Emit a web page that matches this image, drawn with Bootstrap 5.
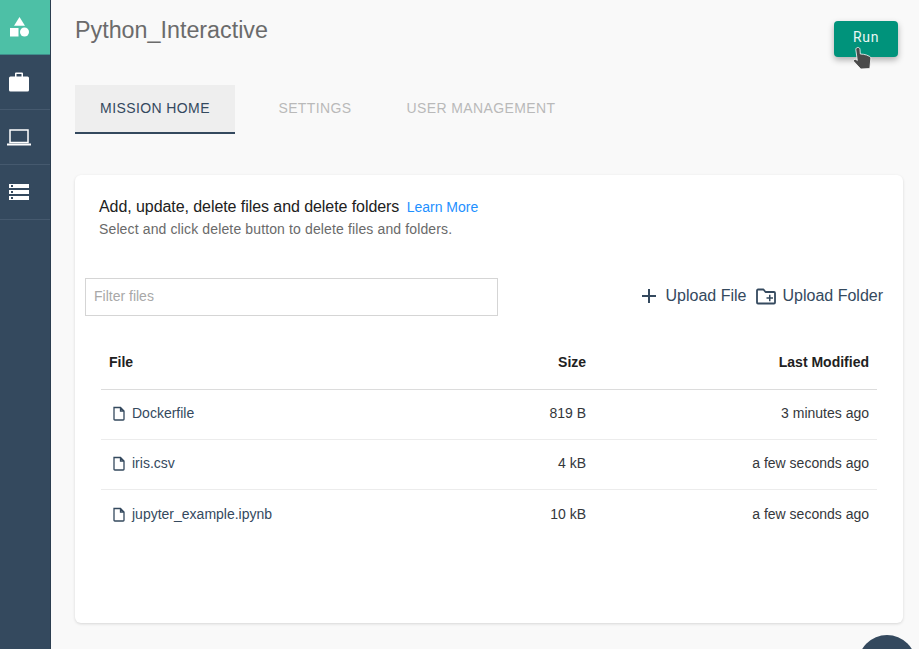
<!DOCTYPE html>
<html lang="en">

<head>
    <meta charset="UTF-8" />
    <title>Python_Interactive</title>
    <link href="https://cdn.jsdelivr.net/npm/bootstrap@5.3.3/dist/css/bootstrap.min.css" rel="stylesheet" />
    <style>
        html, body {
            height: 649px;
            overflow: hidden;
        }

        body {
            background: #f9f9f9;
            font-family: "Liberation Sans", Arial, sans-serif;
            font-size: 14px;
            color: #212529;
        }

        .page-wrap {
            height: 649px;
            overflow: hidden;
        }

        .side-bar {
            width: 51px;
            flex: 0 0 51px;
            height: 649px;
            background: #34495e;
            border-right: 1px solid #2c3e50;
        }

        .side-item {
            height: 55px;
            padding-left: 9px;
            border-bottom: 1px solid #45596e;
        }

        .side-item.side-top {
            background: #4dc0a6;
            border-bottom-color: #3f8f8c;
        }

        .side-item.side-wide {
            padding-left: 7px;
        }

        .main-area {
            flex: 1 1 auto;
            min-width: 0;
            padding: 0 16px 0 24px;
        }

        .page-title {
            font-size: 23.3px;
            font-weight: 400;
            line-height: 26px;
            color: #6b6b6b;
            margin: 17px 0 0;
        }

        .run-btn {
            width: 64px;
            height: 36px;
            margin: 21px 5px 0 0;
            padding: 0 0 4px;
            background: #00937b;
            color: #e9f7f4;
            font-family: Roboto, sans-serif;
            font-size: 14px;
            letter-spacing: 0.7px;
            border: 0;
            border-radius: 4px;
            box-shadow: 0 3px 6px rgba(0, 0, 0, 0.3);
        }

        .hand-cursor {
            position: absolute;
            left: 18px;
            top: 46px;
        }

        .tab-row {
            margin-top: 28px;
        }

        .tab-link {
            display: block;
            width: 160px;
            height: 49px;
            line-height: 47px;
            text-align: center;
            font-size: 14px;
            letter-spacing: 0.4px;
            color: #b9b9b9;
            text-decoration: none;
            border-bottom: 2px solid transparent;
        }

        .tab-link.tab-on {
            background: #eeeeee;
            color: #34495e;
            border-bottom-color: #34495e;
        }

        .tab-link.tab-wide {
            width: 172px;
        }

        .panel-box {
            margin-top: 41px;
            height: 448px;
            background: #fff;
            border-radius: 6px;
            box-shadow: 0 1px 3px rgba(0, 0, 0, 0.14);
            padding: 22px 10px 0;
        }

        .panel-head {
            padding-left: 14px;
            font-size: 16px;
            letter-spacing: -0.07px;
            line-height: 20px;
            color: #212121;
        }

        .learn-link {
            font-size: 14px;
            letter-spacing: 0;
            color: #1e90ff;
            text-decoration: none;
            margin-left: 3px;
        }

        .panel-sub {
            padding-left: 14px;
            font-size: 14px;
            letter-spacing: 0.13px;
            line-height: 20px;
            color: #6a6a6a;
            margin-top: 2px;
        }

        .filter-input {
            width: 413px;
            height: 38px;
            border: 1px solid #d5d5d5;
            padding: 0 8px 2px;
            font-size: 14px;
            outline: 0;
        }

        .filter-input::placeholder {
            color: #a8a8a8;
        }

        .upload-row {
            margin-top: 39px;
            padding-right: 10px;
        }

        .upload-list {
            gap: 9px;
            padding-bottom: 2px;
        }

        .upload-act {
            gap: 8px;
            font-size: 16px;
            color: #34495e;
            background: none;
            border: 0;
            padding: 0;
        }

        .upload-act.upload-folder {
            gap: 7px;
        }

        .file-table {
            margin: 26px 0 0 16px;
            width: 776px;
            font-size: 14px;
        }

        .file-table th {
            height: 47px;
            font-weight: 700;
            color: #212121;
            padding: 0 8px 5px;
            border-bottom: 1px solid #dcdcdc;
        }

        .file-table td {
            height: 50px;
            padding: 0 8px 2px;
            color: #34373b;
            border-bottom: 1px solid #ececec;
        }

        .file-table th:nth-child(2),
        .file-table td:nth-child(2) {
            padding-right: 9px;
        }

        .file-table tr:last-child td {
            padding-bottom: 0;
            border-bottom: 0;
        }

        .file-table td.file-name {
            color: #34495e;
        }

        .file-line {
            gap: 6px;
            padding-left: 3px;
        }

        .chat-bubble {
            position: absolute;
            left: 858px;
            top: 635px;
            width: 58px;
            height: 58px;
            border-radius: 50%;
            background: #34495e;
        }
    </style>
</head>

<body>
    <div class="page-wrap d-flex position-relative">
        <div class="side-bar">
            <div class="side-item side-top d-flex align-items-center">
                <svg width="20" height="20" viewBox="0 0 20 20" fill="#fff">
                    <path d="M10.500 0l5.500 8.800H5z" />
                    <rect x="1" y="11" width="8.500" height="8.500" />
                    <circle cx="15.500" cy="15" r="4.500" />
                </svg>
            </div>
            <div class="side-item d-flex align-items-center">
                <svg width="20" height="20" viewBox="0 0 20 20" fill="#fff">
                    <path fill-rule="evenodd" d="M7 0.500h6a1 1 0 0 1 1 1V4.500h4.500a1.500 1.500 0 0 1 1.500 1.500v12a1.500 1.500 0 0 1-1.500 1.500H1.500A1.500 1.500 0 0 1 0 18V6a1.500 1.500 0 0 1 1.500-1.500H6V1.500a1 1 0 0 1 1-1zM7.500 2v2.500h5V2z" />
                </svg>
            </div>
            <div class="side-item side-wide d-flex align-items-center">
                <svg width="24" height="17" viewBox="0 0 24 17" fill="none" stroke="#fff">
                    <rect x="3" y="1" width="18" height="12.500" stroke-width="1.500" />
                    <path d="M0 15.500h24" stroke-width="2" />
                </svg>
            </div>
            <div class="side-item d-flex align-items-center">
                <svg width="20" height="16" viewBox="0 0 20 16" fill="#fff">
                    <path fill-rule="evenodd" d="M0 0h20v4H0zM2 1v2h2V1zM0 6h20v4H0zM2 7v2h2V7zM0 12h20v4H0zM2 13v2h2v-2z" />
                </svg>
            </div>
        </div>

        <div class="main-area">
            <div class="d-flex justify-content-between align-items-start">
                <h1 class="page-title">Python_Interactive</h1>
                <div class="position-relative">
                    <button class="run-btn">Run</button>
                    <svg class="hand-cursor" width="20" height="25" viewBox="0 0 20 25">
                        <path d="M3.800 3.500C3.800.8 8 .8 8 3.500L8.300 8 11.500 8.300 14.500 9l3.300 1.500c1 .5 1 1.500 1 2.500l-1 9.500-9 .5-7-7.500c-1-1.500 1-3 2.300-2l1.200 1z" fill="#4a4a4a" stroke="#fff" stroke-width="0.800" />
                    </svg>
                </div>
            </div>

            <div class="d-flex tab-row">
                <a class="tab-link tab-on" href="#">MISSION HOME</a>
                <a class="tab-link" href="#">SETTINGS</a>
                <a class="tab-link tab-wide" href="#">USER MANAGEMENT</a>
            </div>

            <div class="panel-box">
                <div class="panel-head">Add, update, delete files and delete folders <a class="learn-link" href="#">Learn More</a></div>
                <div class="panel-sub">Select and click delete button to delete files and folders.</div>

                <div class="d-flex justify-content-between align-items-center upload-row">
                    <input class="filter-input" type="text" placeholder="Filter files" />
                    <div class="d-flex align-items-center upload-list">
                        <button class="upload-act d-flex align-items-center">
                            <svg width="18" height="18" viewBox="0 0 18 18" stroke="#34495e" stroke-width="2" fill="none">
                                <path d="M9 2v14M2 9h14" />
                            </svg>
                            Upload File
                        </button>
                        <button class="upload-act upload-folder d-flex align-items-center">
                            <svg width="20" height="17" viewBox="0 0 20 17" stroke="#34495e" stroke-width="1.800" fill="none">
                                <path d="M1 2.500a1 1 0 0 1 1-1h5.500l2 2.500H18a1 1 0 0 1 1 1v9.500a1 1 0 0 1-1 1H2a1 1 0 0 1-1-1z" stroke-linejoin="round" />
                                <path d="M10.500 10h6.500M13.750 6.800v6.400" stroke-width="1.500" />
                            </svg>
                            Upload Folder
                        </button>
                    </div>
                </div>

                <table class="file-table">
                    <thead>
                        <tr>
                            <th>File</th>
                            <th class="text-end">Size</th>
                            <th class="text-end">Last Modified</th>
                        </tr>
                    </thead>
                    <tbody>
                        <tr>
                            <td class="file-name"><span class="file-line d-flex align-items-center"><svg width="14" height="15" viewBox="0 0 14 15" fill="none" stroke="#34495e" stroke-width="1.300"><path d="M2 1.500h6.500L12 5v8.200a.8.8 0 0 1-.8.8H2.800a.8.8 0 0 1-.8-.8zM8.500 1.500V5H12" /></svg>Dockerfile</span></td>
                            <td class="text-end">819 B</td>
                            <td class="text-end">3 minutes ago</td>
                        </tr>
                        <tr>
                            <td class="file-name"><span class="file-line d-flex align-items-center"><svg width="14" height="15" viewBox="0 0 14 15" fill="none" stroke="#34495e" stroke-width="1.300"><path d="M2 1.500h6.500L12 5v8.200a.8.8 0 0 1-.8.8H2.800a.8.8 0 0 1-.8-.8zM8.500 1.500V5H12" /></svg>iris.csv</span></td>
                            <td class="text-end">4 kB</td>
                            <td class="text-end">a few seconds ago</td>
                        </tr>
                        <tr>
                            <td class="file-name"><span class="file-line d-flex align-items-center"><svg width="14" height="15" viewBox="0 0 14 15" fill="none" stroke="#34495e" stroke-width="1.300"><path d="M2 1.500h6.500L12 5v8.200a.8.8 0 0 1-.8.8H2.800a.8.8 0 0 1-.8-.8zM8.500 1.500V5H12" /></svg>jupyter_example.ipynb</span></td>
                            <td class="text-end">10 kB</td>
                            <td class="text-end">a few seconds ago</td>
                        </tr>
                    </tbody>
                </table>
            </div>
        </div>
        <div class="chat-bubble"></div>
    </div>
    <script src="https://cdn.jsdelivr.net/npm/bootstrap@5.3.3/dist/js/bootstrap.bundle.min.js"></script>
</body>

</html>
